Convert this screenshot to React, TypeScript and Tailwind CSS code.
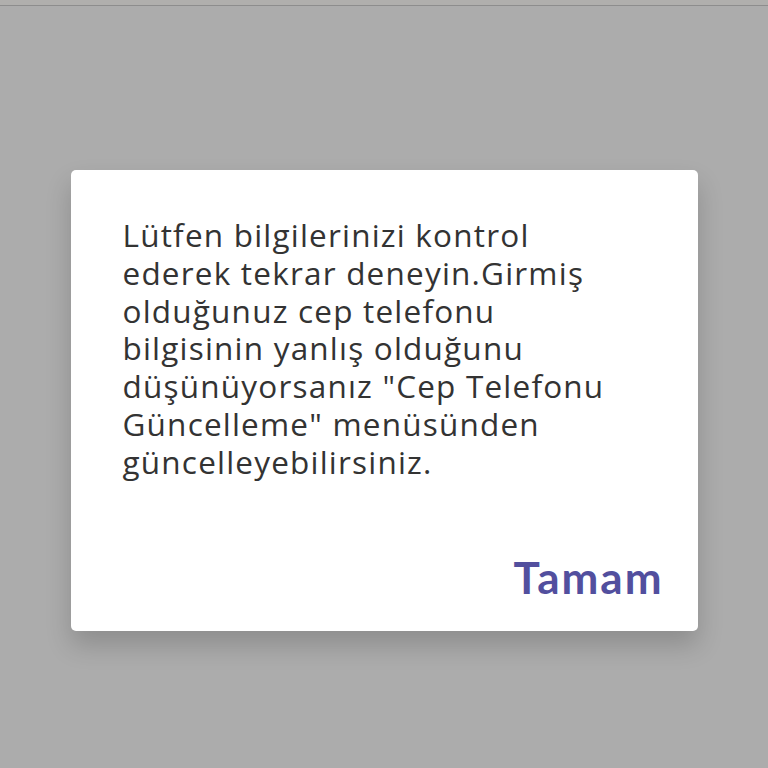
export default function App() {
  return (
    <div className="flex h-[768px] w-[768px] flex-col bg-[#acacac]" style={{ fontFamily: '"Open Sans", sans-serif' }}>
      {/* status strip */}
      <div className="h-[5px] bg-[#b0afad]" />
      <div className="h-px bg-[#8d8d8d]" />

      <div className="flex flex-1 items-start justify-center pt-[164px]">
        <div className="flex h-[461px] w-[627px] flex-col rounded-[5px] bg-white pl-[52px] pr-[34px] pt-[46px] shadow-[0_14px_26px_rgba(0,0,0,0.18)]">
          <p className="text-[31.5px] leading-[37.8px] tracking-[1.2px] text-[#333333]">
            Lütfen bilgilerinizi kontrol
            <br />
            ederek tekrar deneyin.Girmiş
            <br />
            olduğunuz cep telefonu
            <br />
            bilgisinin yanlış olduğunu
            <br />
            düşünüyorsanız "Cep Telefonu
            <br />
            Güncelleme" menüsünden
            <br />
            güncelleyebilirsiniz.
          </p>
          <div className="mt-auto flex justify-end pb-[32px]">
            <button
              className="text-[44px] font-bold leading-none tracking-[2px] text-[#524f9e]"
              style={{ fontFamily: 'Lato, sans-serif' }}
            >
              Tamam
            </button>
          </div>
        </div>
      </div>
    </div>
  );
}
